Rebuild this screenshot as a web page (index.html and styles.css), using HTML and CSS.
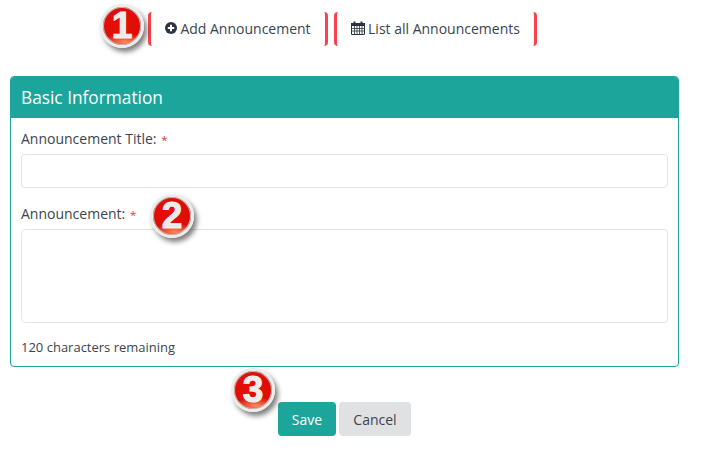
FILE: index.html
```html
<!DOCTYPE html>
<html lang="en">
<head>
<meta charset="utf-8">
<title>Add Announcement</title>
<link rel="stylesheet" href="styles.css">
</head>
<body>
<main class="page">
  <nav class="tabs">
    <a class="tab tab-add">
      <svg class="icon" viewBox="0 0 12 12" width="12" height="12"><circle cx="6" cy="6" r="6" fill="#2b3440"/><path d="M6 2.8v6.4M2.8 6h6.4" stroke="#fff" stroke-width="2"/></svg>
      Add Announcement
    </a>
    <a class="tab tab-list">
      <svg class="icon" viewBox="0 0 14 14" width="14" height="14"><path d="M.5 3h13v10.5H.5z" fill="none" stroke="#2b3440"/><path d="M0 2h14v3H0z" fill="#2b3440"/><path d="M3.5 5v8M6 5v8M8.5 5v8M11 5v8M1 7.5h12M1 10h12" stroke="#2b3440" stroke-width=".8"/><path d="M3.5 .5v3M10.5 .5v3" stroke="#2b3440" stroke-width="2"/></svg>
      List all Announcements
    </a>
  </nav>

  <section class="panel">
    <h2 class="panel-title">Basic Information</h2>
    <div class="panel-body">
      <div class="field field-title">
        <label class="label">Announcement Title: <span class="req">*</span></label>
        <input class="control input" type="text">
      </div>
      <div class="field">
        <label class="label">Announcement: <span class="req">*</span></label>
        <textarea class="control area"></textarea>
      </div>
      <p class="count">120 characters remaining</p>
    </div>
  </section>

  <div class="actions">
    <button class="btn btn-save" type="button">Save</button>
    <button class="btn btn-cancel" type="button">Cancel</button>
  </div>
</main>

<span class="badge badge-1">1</span>
<span class="badge badge-2">2</span>
<span class="badge badge-3">3</span>
</body>
</html>
```
FILE: styles.css
```css
* { box-sizing: border-box; }
html, body { margin: 0; padding: 0; background: #fff; }
body {
  position: relative;
  width: 701px;
  height: 452px;
  overflow: hidden;
  font-family: "Open Sans", sans-serif;
  font-size: 14px;
  color: #3a4450;
}
.page { width: 689px; padding: 12px 0 0 10px; }

.tabs { display: flex; justify-content: flex-start; gap: 6px; padding-left: 138px; height: 34px; }
.tab {
  display: flex;
  align-items: center;
  justify-content: center;
  gap: 3px;
  height: 34px;
  padding-bottom: 2px;
  border-left: 3px solid #f8434f;
  border-right: 3px solid #f8434f;
  border-radius: 4px;
  color: #3a4450;
  font-size: 14px;
}
.tab-add { width: 180px; }
.tab-list { width: 203px; }
.icon { flex: none; }

.panel {
  margin-top: 30px;
  width: 669px;
  height: 291px;
  border: 1px solid #1ca59a;
  border-radius: 4px;
  overflow: hidden;
}
.panel-title {
  margin: 0;
  height: 41px;
  padding: 0 10px;
  background: #1ca59a;
  color: #fff;
  font-weight: 400;
  font-size: 17.3px;
  line-height: 41px;
}
.panel-body { padding: 11px 10px 0; }
.field { display: flex; flex-direction: column; }
.field-title { margin-bottom: 16px; }
.label { height: 25px; line-height: 20px; font-size: 14px; }
.req { color: #e0353f; font-size: 11.5px; margin-left: 1px; }
.control {
  display: block;
  width: 647px;
  border: 1px solid #e3e3e3;
  border-radius: 4px;
  background: #fff;
  outline: none;
  resize: none;
}
.input { height: 34px; }
.area { height: 94px; }
.count { margin: 16px 0 0; font-size: 13px; line-height: 17px; }

.actions { display: flex; justify-content: center; gap: 3px; margin-top: 35px; width: 669px; }
.btn {
  height: 34px;
  border: 0;
  border-radius: 4px;
  font-family: "Open Sans", sans-serif;
  font-size: 14px;
  padding: 0;
}
.btn-save { width: 58px; background: #1ca59a; color: #fff; }
.btn-cancel { width: 72px; background: #e0e1e3; color: #3a4450; }

.badge {
  position: absolute;
  width: 44px;
  height: 44px;
  border-radius: 50%;
  border: 3px solid #ececec;
  background:
    radial-gradient(ellipse 60% 22% at 58% 92%, #ff8a5a 0%, rgba(255,110,70,0) 100%),
    radial-gradient(circle at 40% 40%, #e60f08 0%, #dd0e07 60%, #c20b05 100%);
  box-shadow: 3px 4px 5px rgba(0,0,0,.5), inset 0 0 0 1px #b8b8b8;
  color: #ececec;
  font-family: "Liberation Sans", sans-serif;
  font-weight: 700;
  font-size: 37px;
  line-height: 38px;
  text-align: center;
  -webkit-text-stroke: 1px #f2f2f2;
}
.badge-1 { left: 100px; top: 4px; }
.badge-2 { left: 150px; top: 194px; }
.badge-3 { left: 231px; top: 368px; }
```
